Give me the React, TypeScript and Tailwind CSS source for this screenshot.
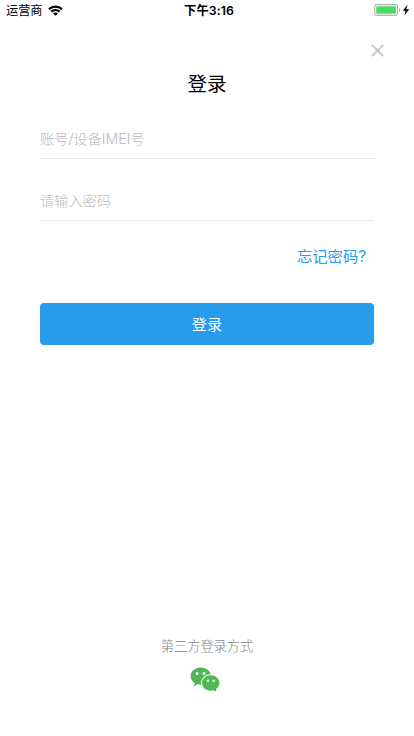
import { useState } from 'react';

function WifiIcon() {
    return (
        <svg width="15" height="11" viewBox="0 0 15 11" fill="none" stroke="#000" strokeWidth="2.3">
            <path d="M1 4.1C4.7 .7 10.3 .7 14 4.1" />
            <path d="M3.3 6.7C5.7 4.5 9.3 4.5 11.7 6.7" />
            <path d="M7.5 10.8L5 8.4C6.4 7.2 8.6 7.2 10 8.4Z" fill="#000" stroke="none" />
        </svg>
    );
}

function BatteryIcon() {
    return (
        <svg width="36" height="12" viewBox="0 0 36 12" fill="none">
            <rect x=".6" y=".6" width="23" height="10.8" rx="2.4" stroke="#b4b4b4" strokeWidth="1.1" />
            <rect x="2.2" y="2.2" width="19.8" height="7.6" rx=".8" fill="#4cd964" />
            <path d="M25 4C26.5 4.4 26.5 7.6 25 8Z" fill="#b4b4b4" />
            <path d="M33.4 .8L28.8 6.7H31.5L30.5 11.2L35.2 5.2H32.4Z" fill="#000" />
        </svg>
    );
}

function StatusBar() {
    return (
        <div className="grid h-5 grid-cols-3 items-start pl-1.5 pr-[4px]">
            <div className="flex items-start gap-[5px]">
                <span className="pt-px text-[12.2px] leading-5">运营商</span>
                <span className="pt-[5px]">
                    <WifiIcon />
                </span>
            </div>
            <span className="pl-0.5 pt-px text-center text-[12.3px] font-semibold leading-5 tracking-[0.1px]">下午3:16</span>
            <div className="flex justify-end pt-1">
                <BatteryIcon />
            </div>
        </div>
    );
}

function WechatIcon() {
    return (
        <svg width="30" height="26" viewBox="0 0 30 26">
            <path
                d="M10.7 .6C5 .6 .6 4.4 .6 9.2C.6 12 2.2 14.4 4.7 16L3.8 19.4L7.6 17.3C8.6 17.6 9.7 17.8 10.9 17.8C16.6 17.8 21 13.9 21 9.2C21 4.4 16.4 .6 10.7 .6Z"
                fill="#50b755"
            />
            <path
                d="M20.6 8.3C15.8 8.3 12 11.7 12 16C12 20.3 15.8 23.7 20.6 23.7C21.6 23.7 22.6 23.5 23.5 23.3L26.6 24.8L25.9 22.2C28.1 20.8 29.5 18.6 29.5 16C29.5 11.7 25.4 8.3 20.6 8.3Z"
                fill="#50b755"
                stroke="#fff"
                strokeWidth="2"
                paintOrder="stroke"
            />
            <g fill="#fff">
                <circle cx="7" cy="6.6" r="1.5" />
                <circle cx="14.1" cy="6.6" r="1.5" />
                <circle cx="17.9" cy="13.7" r="1.2" />
                <circle cx="23.6" cy="13.7" r="1.2" />
            </g>
        </svg>
    );
}

export default function App() {
    const [account, setAccount] = useState('');
    const [password, setPassword] = useState('');

    const fields = [
        { id: 'account', type: 'text', placeholder: '账号/设备IMEI号', value: account, onChange: setAccount },
        { id: 'password', type: 'password', placeholder: '请输入密码', value: password, onChange: setPassword },
    ];

    return (
        <div className="flex h-[736px] w-full flex-col bg-white font-['Inter','Noto_Sans_CJK_SC',sans-serif] text-black">
            <StatusBar />

            {/* Close */}
            <div className="flex justify-end pr-[30px] pt-6">
                <button className="cursor-pointer">
                    <svg width="13" height="13" viewBox="0 0 13 13" stroke="#c4c4c4" strokeWidth="1.9">
                        <path d="M.8 .8L12.2 12.2M12.2 .8L.8 12.2" />
                    </svg>
                </button>
            </div>

            <h1 className="mt-[11px] text-center text-[19.5px] leading-8">登录</h1>

            {/* Form */}
            <form className="flex flex-col px-10 pt-[18px]" onSubmit={e => e.preventDefault()}>
                {fields.map(field => (
                    <input
                        key={field.id}
                        type={field.type}
                        placeholder={field.placeholder}
                        value={field.value}
                        onChange={e => field.onChange(e.target.value)}
                        className="mb-[21px] h-[41px] w-full border-b border-[#e6e6e6] text-[14.2px] font-light outline-none placeholder:text-[#b9b9c0]"
                    />
                ))}
                <a className="mr-2 mt-[3px] cursor-pointer self-end text-[15.3px] leading-6 text-[#289ceb]">忘记密码?</a>
                <button
                    type="submit"
                    className="mt-[34px] h-[42px] cursor-pointer rounded bg-[#289ceb] pt-0.5 text-[15.2px] text-white"
                >
                    登录
                </button>
            </form>

            {/* Third-party login */}
            <div className="mt-auto flex flex-col items-center pb-[43px]">
                <span className="text-[13.2px] font-light leading-5 text-[#858585]">第三方登录方式</span>
                <button className="mr-1 mt-[11px] cursor-pointer">
                    <WechatIcon />
                </button>
            </div>
        </div>
    );
}
